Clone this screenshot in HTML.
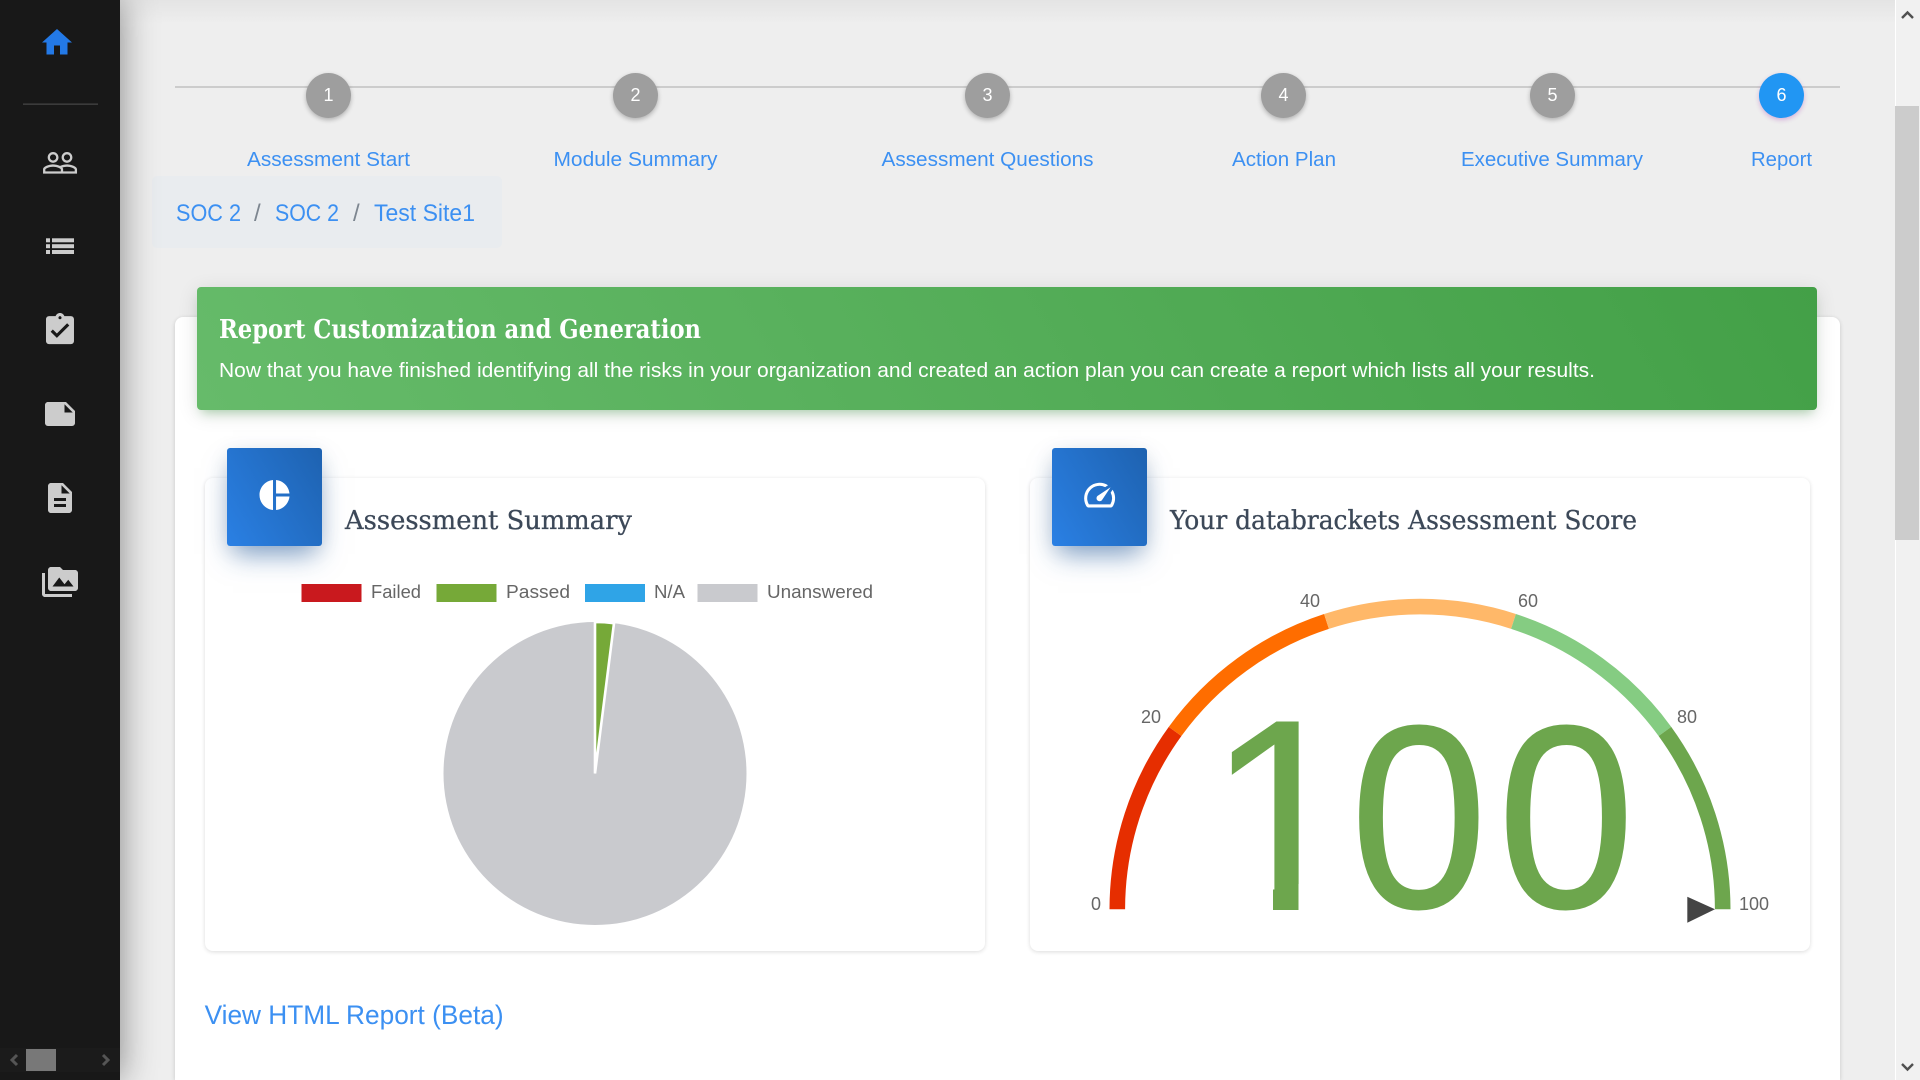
<!DOCTYPE html>
<html lang="en"><head><meta charset="utf-8"><title>Report</title>
<style>
html,body{margin:0;padding:0;width:1920px;height:1080px;overflow:hidden;background:#eee}
div{position:absolute;box-sizing:border-box}
#w{left:0;top:0;width:1920px;height:1080px;overflow:hidden;background:#eee}
svg{position:absolute;left:0;top:0}
text{font-family:"Liberation Sans",Arial,sans-serif}
text.serif{font-family:"DejaVu Serif","Liberation Serif",serif}
.blue{fill:#3c90f2}
.step{font-size:20px;text-anchor:start}
.lg{font-size:18px;fill:#666}
.num{font-size:18px;fill:#fff;text-anchor:middle}
.slash{font-size:24px;fill:#7d8690}
.ic{fill:#ccc}
</style></head><body>
<div id="w">
<div style="left:0;top:0;width:1895px;height:24px;background:linear-gradient(#e4e4e4,#eee)"></div>
<div style="left:152px;top:176px;width:350px;height:72px;background:#e9ecef;border-radius:5px"></div>
<div style="left:175px;top:317px;width:1665px;height:763px;background:#fff;border-radius:8px 8px 0 0;box-shadow:0 1px 4px rgba(0,0,0,.16)"></div>
<div style="left:197px;top:287px;width:1620px;height:123px;border-radius:4px;background:linear-gradient(60deg,#66bb6a,#43a047);box-shadow:0 4px 20px rgba(0,0,0,.12),0 7px 10px -5px rgba(76,175,80,.4)"></div>
<div style="left:205px;top:478px;width:780px;height:473px;background:#fff;border-radius:8px;box-shadow:0 1px 4px rgba(0,0,0,.14)"></div>
<div style="left:1030px;top:478px;width:780px;height:473px;background:#fff;border-radius:8px;box-shadow:0 1px 4px rgba(0,0,0,.14)"></div>
<div style="left:227px;top:448px;width:95px;height:98px;border-radius:3px;background:linear-gradient(60deg,#2a80e4,#1e62b0);box-shadow:0 14px 26px -6px rgba(30,90,160,.55),0 4px 20px rgba(0,0,0,.08)"></div>
<div style="left:1052px;top:448px;width:95px;height:98px;border-radius:3px;background:linear-gradient(60deg,#2a80e4,#1e62b0);box-shadow:0 14px 26px -6px rgba(30,90,160,.55),0 4px 20px rgba(0,0,0,.08)"></div>
<div style="left:175px;top:86px;width:1665px;height:2px;background:#ccc"></div>
<div style="left:306px;top:73px;width:45px;height:45px;border-radius:50%;background:#9e9e9e;box-shadow:0 2px 5px rgba(0,0,0,.26)"></div>
<div style="left:613px;top:73px;width:45px;height:45px;border-radius:50%;background:#9e9e9e;box-shadow:0 2px 5px rgba(0,0,0,.26)"></div>
<div style="left:965px;top:73px;width:45px;height:45px;border-radius:50%;background:#9e9e9e;box-shadow:0 2px 5px rgba(0,0,0,.26)"></div>
<div style="left:1261px;top:73px;width:45px;height:45px;border-radius:50%;background:#9e9e9e;box-shadow:0 2px 5px rgba(0,0,0,.26)"></div>
<div style="left:1530px;top:73px;width:45px;height:45px;border-radius:50%;background:#9e9e9e;box-shadow:0 2px 5px rgba(0,0,0,.26)"></div>
<div style="left:1759px;top:73px;width:45px;height:45px;border-radius:50%;background:#2196f3;box-shadow:0 2px 5px rgba(156,39,176,.3)"></div>
<div style="left:0;top:0;width:120px;height:1080px;background:#181818;box-shadow:0 0 34px rgba(0,0,0,.45)"></div>
<div style="left:1895px;top:0;width:25px;height:1080px;background:#f1f1f1;border-left:1px solid #fff"></div>
<div style="left:1895px;top:106px;width:24px;height:434px;background:#ccc"></div>
<div style="left:0;top:1048px;width:120px;height:24px;background:#1b1b1b"></div>
<div style="left:26px;top:1049px;width:30px;height:22px;background:#787878"></div>

<svg width="1920" height="1080" viewBox="0 0 1920 1080" xmlns="http://www.w3.org/2000/svg">
<!-- sidebar -->
<path transform="translate(39 24.5) scale(1.5)" fill="#2379e6" d="M10 20v-6h4v6h5v-8h3L12 3 2 12h3v8z"/>
<rect x="23" y="103.5" width="75" height="1.3" fill="#444"/>
<path class="ic" fill-rule="evenodd" transform="translate(41.5 144.3) scale(1.545)" d="M16.5 13c-1.2 0-3.07.34-4.5 1-1.43-.67-3.3-1-4.5-1C5.33 13 1 14.08 1 16.25V19h22v-2.75c0-2.17-4.33-3.25-6.5-3.25zm-4 4.5h-10v-1.25c0-.54 2.56-1.75 5-1.75s5 1.21 5 1.75v1.25zm9 0H14v-1.25c0-.46-.2-.86-.52-1.22.88-.3 1.96-.53 3.02-.53 2.44 0 5 1.21 5 1.75v1.25zM7.5 12c1.93 0 3.5-1.57 3.5-3.5S9.43 5 7.5 5 4 6.57 4 8.5 5.57 12 7.5 12zm0-5.5c1.1 0 2 .9 2 2s-.9 2-2 2-2-.9-2-2 .9-2 2-2zm9 5.5c1.93 0 3.5-1.57 3.5-3.5S18.43 5 16.5 5 13 6.57 13 8.5s1.57 3.5 3.5 3.5zm0-5.5c1.1 0 2 .9 2 2s-.9 2-2 2-2-.9-2-2 .9-2 2-2z"/>
<g class="ic"><rect x="46" y="238.3" width="4" height="4"/><rect x="46" y="244.2" width="4" height="4"/><rect x="46" y="250" width="4" height="4"/><rect x="52" y="238.3" width="22" height="4"/><rect x="52" y="244.2" width="22" height="4"/><rect x="52" y="250" width="22" height="4"/></g>
<path class="ic" transform="translate(41.33 311.5) scale(1.555)" d="M19 3h-4.18C14.4 1.84 13.3 1 12 1c-1.3 0-2.4.84-2.82 2H5c-1.1 0-2 .9-2 2v14c0 1.1.9 2 2 2h14c1.1 0 2-.9 2-2V5c0-1.1-.9-2-2-2zm-7 0c.55 0 1 .45 1 1s-.45 1-1 1-1-.45-1-1 .45-1 1-1zm-2 14l-4-4 1.41-1.41L10 14.17l6.59-6.59L18 9l-8 8z"/>
<path class="ic" transform="translate(42 396) scale(1.5)" d="M22 10l-6-6H4c-1.1 0-2 .9-2 2v12.01c0 1.1.9 1.99 2 1.99l16-.01c1.1 0 2-.89 2-1.99v-8zm-7-4.5l5.5 5.5H15V5.5z"/>
<path class="ic" transform="translate(42 480) scale(1.5)" d="M14 2H6c-1.1 0-1.99.9-1.99 2L4 20c0 1.1.89 2 1.99 2H18c1.1 0 2-.9 2-2V8l-6-6zm2 16H8v-2h8v2zm0-4H8v-2h8v2zm-3-5V3.5L18.5 9H13z"/>
<path class="ic" transform="translate(42 564) scale(1.5)" d="M2 6H0v5h.01L0 20c0 1.1.9 2 2 2h18v-2H2V6zm20-2h-8l-2-2H6c-1.1 0-1.99.9-1.99 2L4 16c0 1.1.9 2 2 2h16c1.1 0 2-.9 2-2V6c0-1.1-.9-2-2-2zM7 15l4.5-6 3.5 4.51 2.5-3.01L21 15H7z"/>
<polyline points="17,1055 12,1060 17,1065" fill="none" stroke="#555" stroke-width="3"/>
<polyline points="103,1055 108,1060 103,1065" fill="none" stroke="#555" stroke-width="3"/>
<!-- scrollbar arrows -->
<polyline points="1902,18 1907.5,12.5 1913,18" fill="none" stroke="#505050" stroke-width="2.4"/>
<polyline points="1902,1064 1907.5,1069.5 1913,1064" fill="none" stroke="#505050" stroke-width="2.4"/>
<!-- steps -->
<text class="num" x="328.5" y="101">1</text><text class="num" x="635.5" y="101">2</text><text class="num" x="987.5" y="101">3</text><text class="num" x="1283.5" y="101">4</text><text class="num" x="1552.5" y="101">5</text><text class="num" x="1781.5" y="101">6</text>
<g class="blue">
<text class="step" x="247" y="166" textLength="163" lengthAdjust="spacingAndGlyphs">Assessment Start</text>
<text class="step" x="553.5" y="166" textLength="164" lengthAdjust="spacingAndGlyphs">Module Summary</text>
<text class="step" x="881.5" y="166" textLength="212" lengthAdjust="spacingAndGlyphs">Assessment Questions</text>
<text class="step" x="1232" y="166" textLength="104" lengthAdjust="spacingAndGlyphs">Action Plan</text>
<text class="step" x="1461" y="166" textLength="182" lengthAdjust="spacingAndGlyphs">Executive Summary</text>
<text class="step" x="1751" y="166" textLength="61" lengthAdjust="spacingAndGlyphs">Report</text>
<text x="176" y="221" font-size="24" textLength="65" lengthAdjust="spacingAndGlyphs">SOC 2</text>
<text x="275" y="221" font-size="24" textLength="64" lengthAdjust="spacingAndGlyphs">SOC 2</text>
<text x="374" y="221" font-size="24" textLength="101" lengthAdjust="spacingAndGlyphs">Test Site1</text>
<text x="204.6" y="1024" font-size="27" textLength="299" lengthAdjust="spacingAndGlyphs">View HTML Report (Beta)</text>
</g>
<text class="slash" x="254" y="221">/</text><text class="slash" x="353" y="221">/</text>
<!-- banner -->
<text class="serif" x="219" y="338" font-size="26" font-weight="700" fill="#fff" textLength="482" lengthAdjust="spacingAndGlyphs">Report Customization and Generation</text>
<text x="219" y="377" font-size="20" fill="#fff" textLength="1376" lengthAdjust="spacingAndGlyphs">Now that you have finished identifying all the risks in your organization and created an action plan you can create a report which lists all your results.</text>
<!-- card icons -->
<path fill="#fff" transform="translate(256.5 477) scale(1.5)" d="M11 2v20c-5.07-.5-9-4.79-9-10s3.93-9.5 9-10zm2.03 0v8.99H22c-.47-4.74-4.24-8.52-8.97-8.99zm0 11.01V22c4.74-.47 8.5-4.25 8.97-8.99h-8.97z"/>
<path fill="#fff" transform="translate(1081 476.5) scale(1.55)" d="M20.38 8.57l-1.23 1.85a8 8 0 0 1-.22 7.58H5.07A8 8 0 0 1 15.58 6.85l1.85-1.23A10 10 0 0 0 3.35 19a2 2 0 0 0 1.72 1h13.85a2 2 0 0 0 1.74-1 10 10 0 0 0-.27-10.44zm-9.79 6.84a2 2 0 0 0 2.83 0l5.66-8.49-8.49 5.66a2 2 0 0 0 0 2.83z"/>
<!-- card titles -->
<text class="serif" x="345" y="529" font-size="26" fill="#3c4858" stroke="#3c4858" stroke-width=".3" textLength="287" lengthAdjust="spacingAndGlyphs">Assessment Summary</text>
<text class="serif" x="1170" y="529" font-size="26" fill="#3c4858" stroke="#3c4858" stroke-width=".3" textLength="467" lengthAdjust="spacingAndGlyphs">Your databrackets Assessment Score</text>
<!-- legend -->
<rect x="301.5" y="584" width="60" height="18" fill="#c9191e"/><rect x="436.5" y="584" width="60" height="18" fill="#76a938"/><rect x="585" y="584" width="60" height="18" fill="#2fa4e7"/><rect x="697.5" y="584" width="60" height="18" fill="#c9cace"/>
<text class="lg" x="371" y="598" textLength="50" lengthAdjust="spacingAndGlyphs">Failed</text>
<text class="lg" x="506" y="598" textLength="64" lengthAdjust="spacingAndGlyphs">Passed</text>
<text class="lg" x="654" y="598" textLength="31" lengthAdjust="spacingAndGlyphs">N/A</text>
<text class="lg" x="767" y="598" textLength="106" lengthAdjust="spacingAndGlyphs">Unanswered</text>
<!-- pie -->
<circle cx="595" cy="773.5" r="151.5" fill="#c9cace"/>
<path d="M595 773.5 L595 622 A151.5 151.5 0 0 1 614 623.2 Z" fill="#76a938" stroke="#fff" stroke-width="2.6" stroke-linejoin="miter"/>
<!-- gauge -->
<g fill="none" stroke-width="15.6">
<path d="M1117.3 909.3 A302.7 302.7 0 0 1 1175.1 731.4" stroke="#e62e00"/>
<path d="M1175.1 731.4 A302.7 302.7 0 0 1 1326.5 621.4" stroke="#ff6d00"/>
<path d="M1326.5 621.4 A302.7 302.7 0 0 1 1513.5 621.4" stroke="#ffb869"/>
<path d="M1513.5 621.4 A302.7 302.7 0 0 1 1664.9 731.4" stroke="#85cc82"/>
<path d="M1664.9 731.4 A302.7 302.7 0 0 1 1722.7 909.3" stroke="#6da64d"/>
</g>
<text x="1205.5" y="910" font-size="274" fill="#6da64d">1</text>
<rect x="1215" y="884" width="58" height="30" fill="#fff"/>
<rect x="1298.5" y="884" width="55" height="30" fill="#fff"/>
<text transform="translate(1350.5 907) scale(.945 1)" x="0" y="0" font-size="260" fill="#6da64d" stroke="#6da64d" stroke-width="2">0</text>
<text transform="translate(1497.8 907) scale(.945 1)" x="0" y="0" font-size="260" fill="#6da64d" stroke="#6da64d" stroke-width="2">0</text>
<polygon points="1687.3,896.7 1715,909.3 1687.3,922.7" fill="#444"/>
<g class="lg">
<text x="1091" y="910">0</text><text x="1141" y="723">20</text><text x="1300" y="607">40</text><text x="1518" y="607">60</text><text x="1677" y="723">80</text><text x="1739" y="910">100</text>
</g>
</svg>
</div>
</body></html>
